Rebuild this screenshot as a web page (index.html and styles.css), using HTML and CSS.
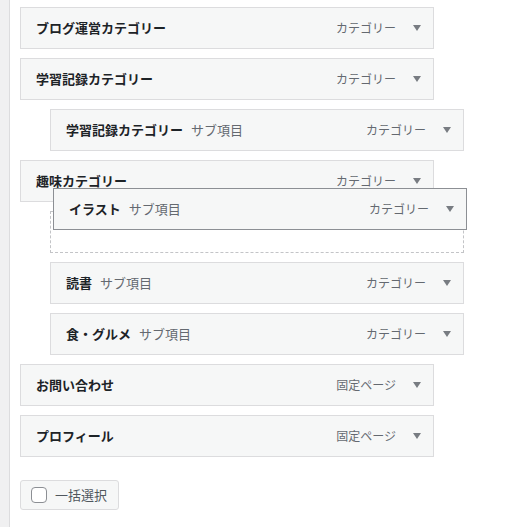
FILE: index.html
```html
<!DOCTYPE html>
<html lang="ja">
<head>
<meta charset="utf-8">
<title>メニュー</title>
<link rel="stylesheet" href="styles.css">
</head>
<body>
<div class="page">
  <div class="gutter"></div>
  <div class="main">
    <ul class="menu">
      <li class="item"><div class="handle"><span class="title">ブログ運営カテゴリー</span><span class="type">カテゴリー</span><span class="arrow"></span></div></li>
      <li class="item"><div class="handle"><span class="title">学習記録カテゴリー</span><span class="type">カテゴリー</span><span class="arrow"></span></div></li>
      <li class="item sub"><div class="handle"><span class="title">学習記録カテゴリー</span><span class="sublabel">サブ項目</span><span class="type">カテゴリー</span><span class="arrow"></span></div></li>
      <li class="item"><div class="handle"><span class="title">趣味カテゴリー</span><span class="type">カテゴリー</span><span class="arrow"></span></div></li>
      <li class="item sub placeholder"></li>
      <li class="item sub"><div class="handle"><span class="title">読書</span><span class="sublabel">サブ項目</span><span class="type">カテゴリー</span><span class="arrow"></span></div></li>
      <li class="item sub"><div class="handle"><span class="title">食・グルメ</span><span class="sublabel">サブ項目</span><span class="type">カテゴリー</span><span class="arrow"></span></div></li>
      <li class="item"><div class="handle"><span class="title">お問い合わせ</span><span class="type">固定ページ</span><span class="arrow"></span></div></li>
      <li class="item"><div class="handle"><span class="title">プロフィール</span><span class="type">固定ページ</span><span class="arrow"></span></div></li>
      <li class="dragging"><div class="handle"><span class="title">イラスト</span><span class="sublabel">サブ項目</span><span class="type">カテゴリー</span><span class="arrow"></span></div></li>
    </ul>
    <button class="bulk" type="button"><span class="check"></span><span class="bulk-label">一括選択</span></button>
  </div>
</div>
</body>
</html>
```

FILE: styles.css
```css
* { box-sizing: border-box; }

html, body {
  margin: 0;
  padding: 0;
  background: #ffffff;
}

body {
  font-family: "Noto Sans CJK JP", "Noto Sans", sans-serif;
  color: #1d2327;
}

.page {
  display: flex;
  min-height: 100vh;
}

.gutter {
  width: 10px;
  flex: none;
  background: #f0f0f1;
  border-right: 1px solid #dcdcde;
}

.main {
  flex: 1;
  padding: 7px 0 0 10px;
}

.menu {
  list-style: none;
  margin: 0;
  padding: 0;
  position: relative;
  display: flex;
  flex-direction: column;
  gap: 9px;
}

.item {
  width: 414px;
  height: 42px;
}

.item.sub {
  margin-left: 30px;
}

.handle {
  height: 42px;
  width: 414px;
  display: flex;
  align-items: center;
  padding: 0 12px 2px 15px;
  background: #f6f7f7;
  border: 1px solid #dcdcde;
}

.title {
  font-size: 13px;
  font-weight: 700;
  color: #1d2327;
  white-space: nowrap;
}

.sublabel {
  font-size: 13px;
  color: #646970;
  margin-left: 8px;
  white-space: nowrap;
}

.type {
  margin-left: auto;
  font-size: 12px;
  color: #646970;
  white-space: nowrap;
}

.arrow {
  width: 0;
  height: 0;
  margin-left: 17px;
  margin-top: 1px;
  border-left: 4px solid transparent;
  border-right: 4px solid transparent;
  border-top: 6px solid #787c82;
}

.placeholder {
  border: 1px dashed #c3c4c7;
}

.dragging {
  position: absolute;
  left: 33px;
  top: 181px;
}

.dragging .handle {
  border-color: #8c8f94;
}

.bulk {
  margin-top: 23px;
  display: flex;
  align-items: center;
  gap: 8px;
  height: 30px;
  padding: 0 11px 1px 10px;
  background: #f6f7f7;
  border: 1px solid #dcdcde;
  border-radius: 3px;
  font-family: inherit;
  font-size: 13px;
  color: #50575e;
  cursor: pointer;
}

.check {
  width: 16px;
  height: 16px;
  margin-top: 1px;
  background: #ffffff;
  border: 1px solid #8c8f94;
  border-radius: 4px;
}
```
